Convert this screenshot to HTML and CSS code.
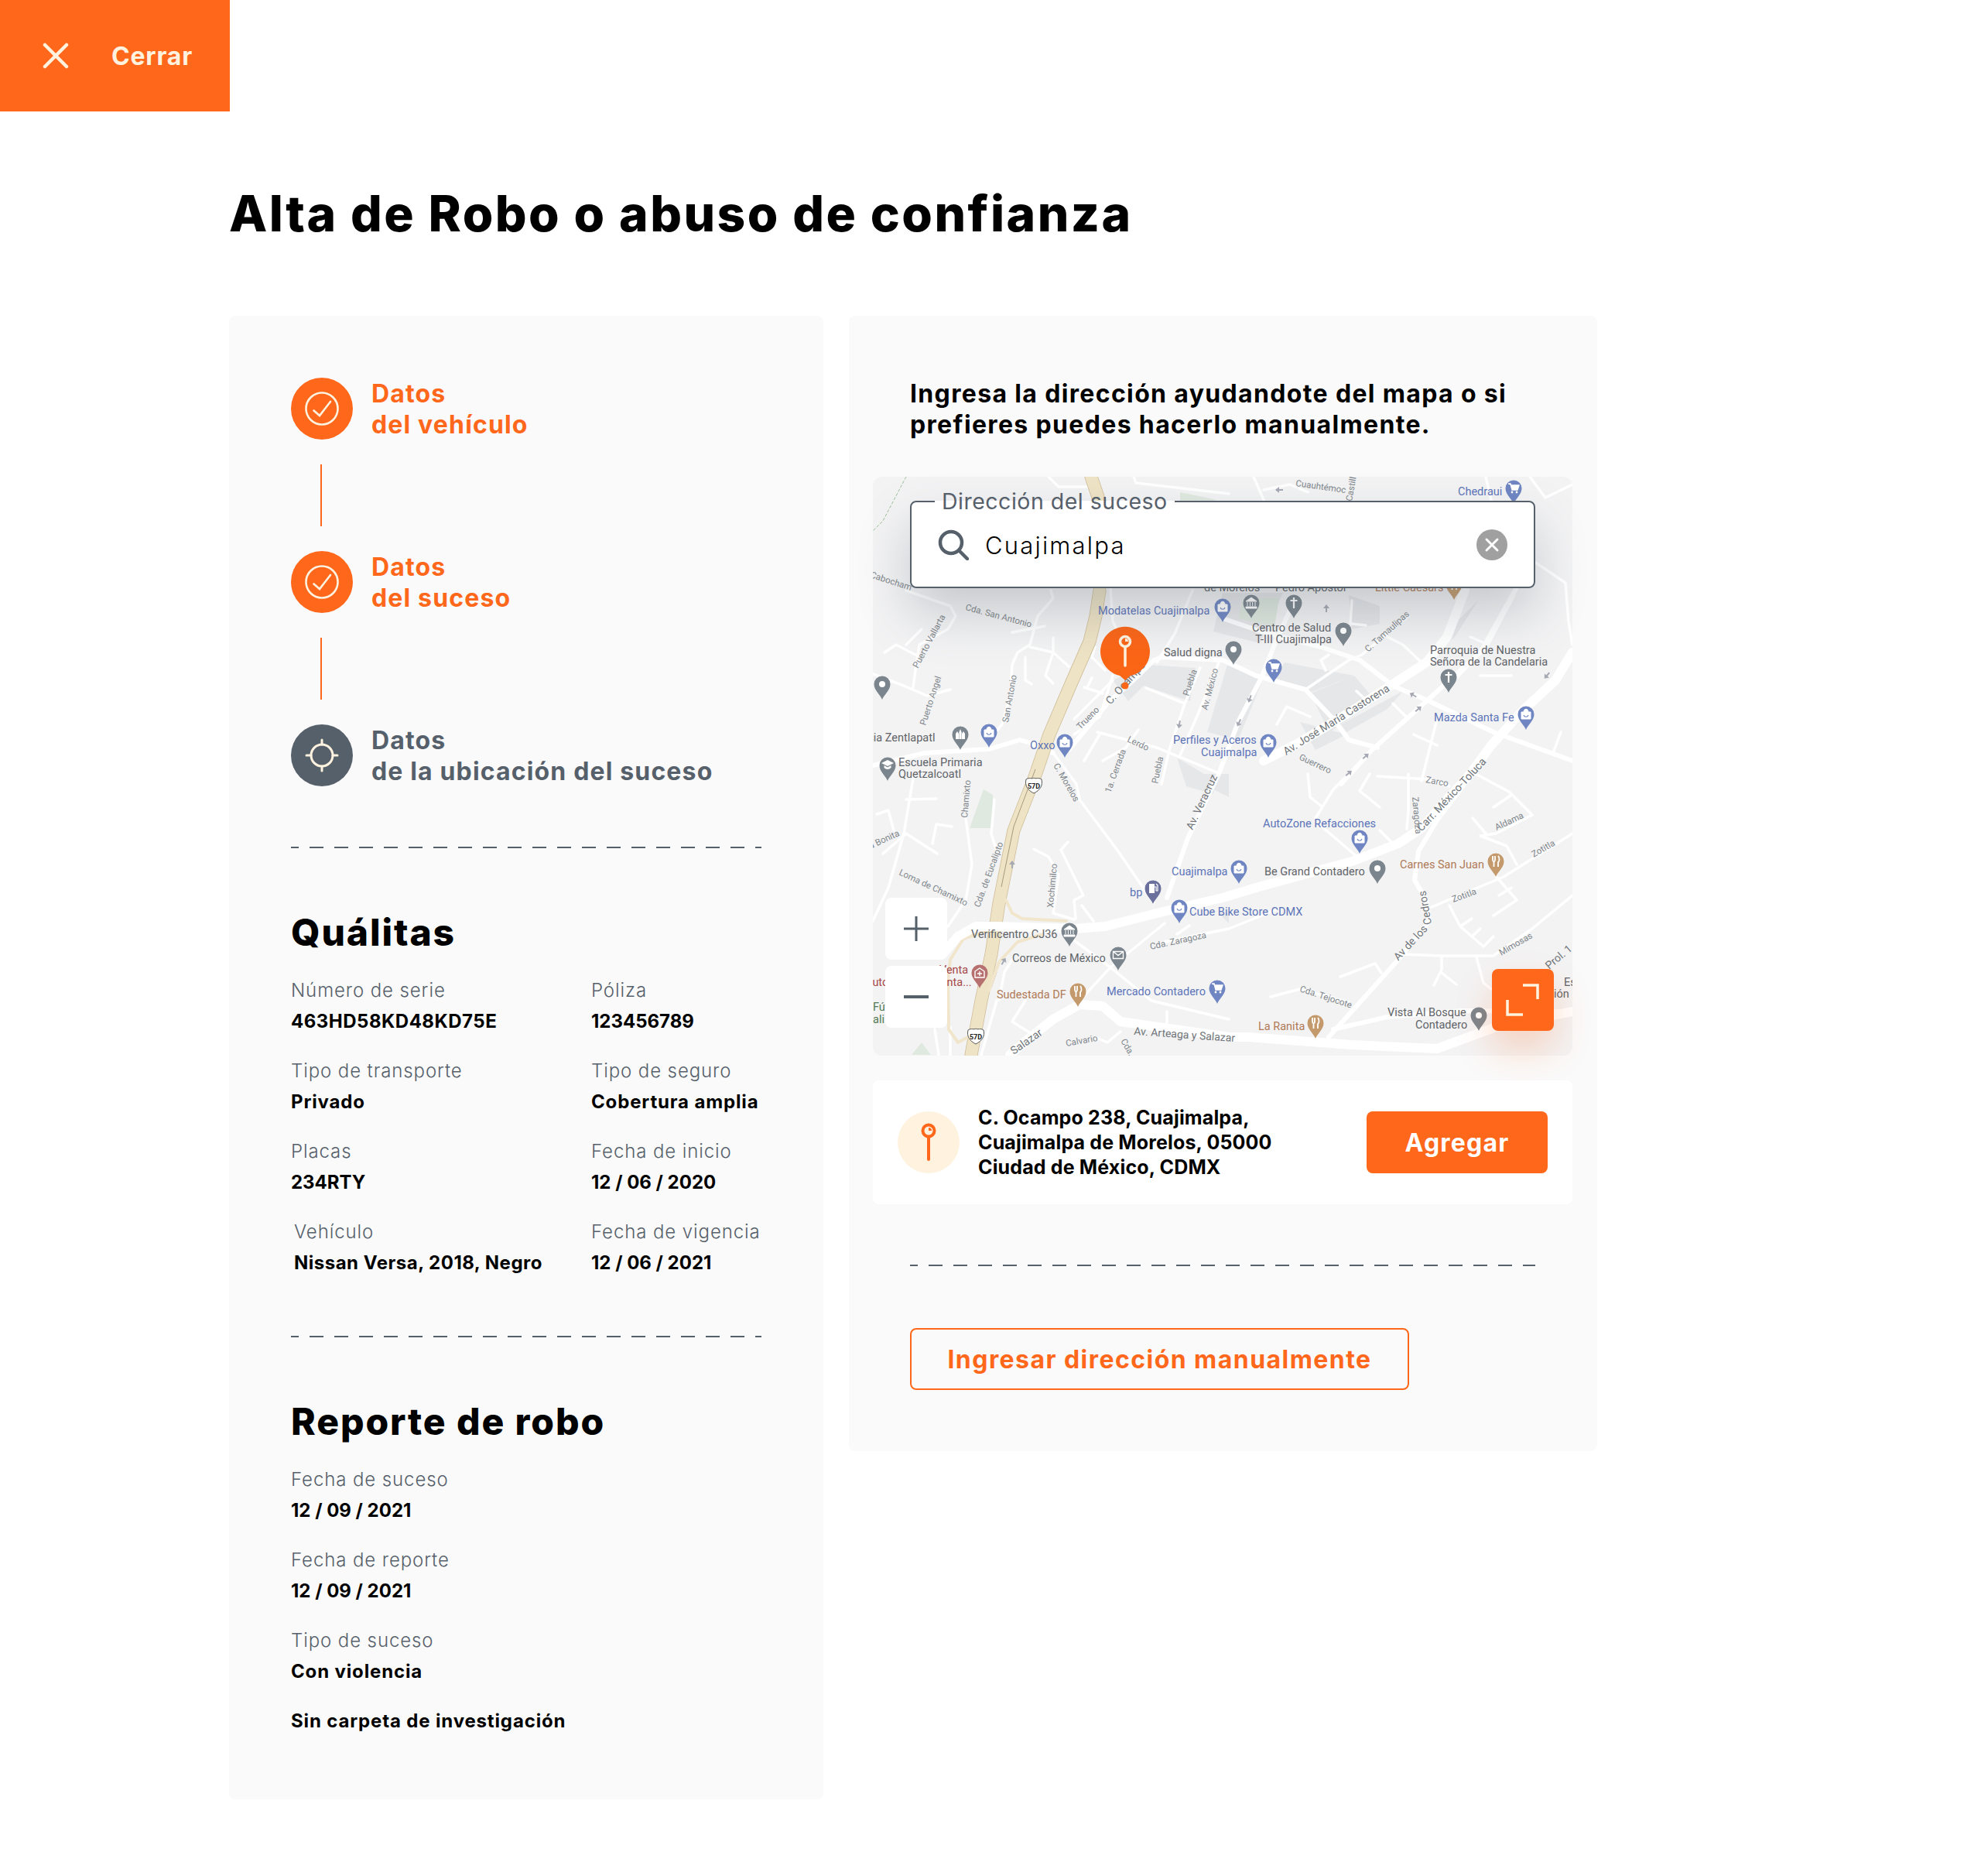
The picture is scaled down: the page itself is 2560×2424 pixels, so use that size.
FILE: index.html
```html
<!DOCTYPE html>
<html lang="es">

<head>
    <meta charset="UTF-8">
    <title>Alta de Robo o abuso de confianza</title>
    <link rel="stylesheet" href="styles.css">
</head>

<body>

    <!-- Boton cerrar -->
    <a class="close-btn" href="#">
        <svg class="close-icon" viewBox="0 0 34 34">
            <path d="M3 3 L31 31 M31 3 L3 31" />
        </svg>
        <span>Cerrar</span>
    </a>

    <h1 class="page-title">Alta de Robo o abuso de confianza</h1>

    <main class="columns">

        <!-- Columna izquierda: pasos y resumen -->
        <section class="panel panel-left">
            <div class="step done">
                <span class="step-circle">
                    <svg viewBox="0 0 44 44">
                        <circle cx="22" cy="22" r="20.5" />
                        <path d="M11.5 24.5 L19 31 L33 13" />
                    </svg>
                </span>
                <p>Datos<br>del vehículo</p>
            </div>
            <div class="step-line"></div>
            <div class="step done">
                <span class="step-circle">
                    <svg viewBox="0 0 44 44">
                        <circle cx="22" cy="22" r="20.5" />
                        <path d="M11.5 24.5 L19 31 L33 13" />
                    </svg>
                </span>
                <p>Datos<br>del suceso</p>
            </div>
            <div class="step-line"></div>
            <div class="step current">
                <span class="step-circle">
                    <svg viewBox="0 0 44 44">
                        <circle cx="22" cy="22" r="14" />
                        <path d="M22 2 V8 M22 36 V42 M2 22 H8 M36 22 H42" />
                    </svg>
                </span>
                <p>Datos<br>de la ubicación del suceso</p>
            </div>

            <div class="dashed first"></div>

            <h2 class="section-title">Quálitas</h2>
            <div class="fields two-cols">
                <div class="field"><span>Número de serie</span><b class="mid">463HD58KD48KD75E</b></div>
                <div class="field"><span>Póliza</span><b class="tight">123456789</b></div>
                <div class="field"><span>Tipo de transporte</span><b>Privado</b></div>
                <div class="field"><span>Tipo de seguro</span><b>Cobertura amplia</b></div>
                <div class="field"><span>Placas</span><b class="tight">234RTY</b></div>
                <div class="field"><span>Fecha de inicio</span><b class="tight">12 / 06 / 2020</b></div>
                <div class="field shifted"><span>Vehículo</span><b class="mid">Nissan Versa, 2018, Negro</b></div>
                <div class="field"><span>Fecha de vigencia</span><b class="tight">12 / 06 / 2021</b></div>
            </div>

            <div class="dashed second"></div>

            <h2 class="section-title">Reporte de robo</h2>
            <div class="fields">
                <div class="field"><span>Fecha de suceso</span><b class="tight">12 / 09 / 2021</b></div>
                <div class="field"><span>Fecha de reporte</span><b class="tight">12 / 09 / 2021</b></div>
                <div class="field"><span>Tipo de suceso</span><b>Con violencia</b></div>
                <div class="field"><b>Sin carpeta de investigación</b></div>
            </div>
        </section>

        <!-- Columna derecha: mapa -->
        <section class="panel panel-right">
            <h3 class="map-title">Ingresa la dirección ayudandote del mapa o si<br>prefieres puedes hacerlo manualmente.</h3>

            <div class="map-wrap">
                <svg class="map" viewBox="0 0 904 748">
                    <defs>
                        <path id="pin" d="M0 20 C-2 14 -10.5 8 -10.5 0 A10.5 10.5 0 1 1 10.5 0 C10.5 8 2 14 0 20Z" />
                        <g id="p-dot"><use href="#pin" /><circle r="4" fill="#fff" /></g>
                        <g id="p-shop"><use href="#pin" /><path d="M-6 -3 H6 V6 H-6Z M-3 -3 C-3 -8 3 -8 3 -3" fill="#fff" stroke="#fff" stroke-width="1" /><path d="M-3 1 C-2 4 2 4 3 1" fill="none" stroke="#6f86c3" stroke-width="1.2" /></g>
                        <g id="p-cart"><use href="#pin" /><path d="M-7 -6 H-4 L-2 2 H5 L7 -4 H-4" fill="#fff" stroke="#fff" stroke-width="1.4" /><circle cx="-2" cy="5" r="1.4" fill="#fff" /><circle cx="4" cy="5" r="1.4" fill="#fff" /></g>
                        <g id="p-food"><use href="#pin" /><path d="M-4 -7 V-2 C-4 0 -2.5 0 -2.5 1 V7 M-1 -7 V-2 C-1 0 -2.5 0 -2.5 1 M3 -7 C5 -5 5 0 3 1 V7" fill="none" stroke="#fff" stroke-width="1.8" /></g>
                        <g id="p-cross"><use href="#pin" /><path d="M0 -7 V7 M-4.5 -3 H4.5" stroke="#fff" stroke-width="2.2" /></g>
                        <g id="p-museum"><use href="#pin" /><path d="M-7 -2 L0 -7 L7 -2Z M-7 5 H7 V7 H-7Z M-5 -1 V4 M-1.6 -1 V4 M1.6 -1 V4 M5 -1 V4" fill="#fff" stroke="#fff" stroke-width="1" /></g>
                        <g id="p-mail"><use href="#pin" /><path d="M-6.5 -4.5 H6.5 V4.5 H-6.5Z M-6.5 -4.5 L0 0.5 L6.5 -4.5" fill="none" stroke="#fff" stroke-width="1.4" /></g>
                        <g id="p-grad"><use href="#pin" /><path d="M-8 -3 L0 -7 L8 -3 L0 1Z M-4.5 0 V3 C-2 5.5 2 5.5 4.5 3 V0 L0 2.4Z" fill="#fff" /></g>
                        <g id="p-church"><use href="#pin" /><path d="M-6 6 V-1 L-4 -4 L-2 -1 V6 M-1.6 6 V-3 L0 -7 L1.6 -3 V6 M2 6 V-1 L4 -4 L6 -1 V6Z" fill="#fff" /></g>
                        <g id="p-fuel"><use href="#pin" /><path d="M-5 -6 H2 V6 H-5Z" fill="#fff" /><path d="M2 -2 H4 V3 H6 V-4 L4 -6" fill="none" stroke="#fff" stroke-width="1.2" /></g>
                        <g id="p-med"><use href="#pin" /><path d="M-6 6 V-2 L0 -6 L6 -2 V6Z" fill="none" stroke="#fff" stroke-width="1.4" /><path d="M0 -2 V4 M-3 1 H3" stroke="#fff" stroke-width="1.4" /></g>
                        <path id="arrow" d="M0 -5 L4 0 H1 V5 H-1 V0 H-4Z" />
                        <g id="shield"><path d="M-10 -8 C-6 -11 -2 -8 0 -10 C2 -8 6 -11 10 -8 C12 0 8 6 0 10 C-8 6 -12 0 -10 -8Z" fill="#fff" stroke="#555" stroke-width="1" /><text class="shield-text" y="4" text-anchor="middle">57D</text></g>
                        <path id="highway-path" d="M282 0 L293 32 M293 147 L288 180 L280 213 L255 270 L228 333 L208 391 L182 457 L163 551 L153 617 L140 677 L127 747" />
                    </defs>

                    <rect width="904" height="748" class="land" />

                    <!-- manzanas y parques -->
                    <g class="block">
                        <path d="M353 243 L417 247 L410 290 L350 270 L330 290 L310 263Z" />
                        <path d="M452 150 L530 150 L500 215 L440 200Z" />
                        <path d="M615 153 L655 167 L655 190 L619 197Z" />
                        <path d="M459 240 L505 260 L472 340 L432 330Z" />
                        <path d="M532 240 L622 257 L562 280 L520 260Z" />
                        <path d="M565 280 L622 257 L650 290 L590 330Z" />
                        <path d="M605 320 L685 277 L665 300 L612 330Z" />
                        <path d="M685 267 L735 207 L782 160 L752 207 L705 243Z" />
                        <path d="M552 317 L612 333 L572 353Z" />
                        <path d="M393 363 L443 393 L440 410 L405 400Z" />
                        <path d="M400 384 L460 384 L460 414Z" />
                        <path d="M447 564 L460 564 L460 577Z" />
                        <path d="M452 277 L465 280 L452 320Z" />
                    </g>
                    <g class="park">
                        <path d="M479 157 L525 157 L519 193 L472 183Z" />
                        <path d="M125 454 L143 404 L155 411 L155 454Z" />
                        <path d="M50 747 L63 731 L75 747Z" />
                        <path d="M397 20 L445 30 L430 32 L397 32Z" />
                    </g>
                    <path class="trail" d="M43 0 L13 57 L0 70" />

                    <!-- calles chicas -->
                    <g class="road-sm">
                        <path d="M15 227 L30 217 L55 230 M43 217 L63 197" />
                        <path d="M0 255 L40 270 L70 283 L100 275" />
                        <path d="M43 147 L100 167 L107 180 L97 197 L60 217 L55 250 L52 272" />
                        <path d="M230 147 L233 157 L213 180 L203 217 L187 227 L180 243 L178 280 L167 320 L150 340" />
                        <path d="M203 220 L233 227 L253 245 M233 208 L233 227 L223 257 L233 267" />
                        <path d="M180 201 L222 193 M197 233 L197 263 L205 268" />
                        <path d="M287 220 L283 233 L300 250 M273 272 L297 280 M283 260 L277 272" />
                        <path d="M260 313 L310 263 M260 333 L293 310 L310 257" />
                        <path d="M233 357 L263 397 L267 417 L317 484 L363 551" />
                        <path d="M293 333 L273 367 M343 327 L327 350 L297 367" />
                        <path d="M290 330 L367 350 L447 383" />
                        <path d="M353 273 L403 293 L383 353 L373 397" />
                        <path d="M423 247 L403 293 M447 240 L423 300 L397 360" />
                        <path d="M307 143 L310 187 L320 207 M413 147 L390 203 L367 240" />
                        <path d="M53 384 L40 461 L20 531 L0 574 M43 417 L82 416 M5 436 L20 431 L27 457" />
                        <path d="M13 487 L43 461 L83 487 M77 474 L82 449 L102 452" />
                        <path d="M120 441 L128 501 L120 547 L97 581" />
                        <path d="M157 417 L153 461 L160 484" />
                        <path d="M208 481 L227 491 L240 514 L233 564 L260 572" />
                        <path d="M252 472 L243 482 L272 541 L260 547 L262 571 M270 554 L285 574" />
                        <path d="M260 599 L307 634 L360 677 L460 701" />
                        <path d="M377 577 L307 634 L267 677" />
                        <path d="M377 601 L460 584 L520 560" />
                        <path d="M180 704 L207 721 M180 704 L197 677" />
                        <path d="M287 724 L303 731 L320 717 M380 691 L380 714 M393 591 L409 580" />
                        <path d="M100 711 L100 747 M80 714 L85 747" />
                        <path d="M163 676 L170 640 L180 624 M160 677 L140 747" />
                        <path d="M722 556 L815 517 L904 461" />
                        <path d="M805 516 L832 547 L802 567 M809 541 L825 531" />
                        <path d="M745 554 L759 581 L789 607 L802 594 M759 581 L774 571 M774 594 L785 584" />
                        <path d="M685 617 L735 619 L802 619 L852 584 L904 541" />
                        <path d="M735 619 L735 637 L725 657 M735 641 L754 656 M780 621 L789 654 L799 662" />
                        <path d="M604 646 L649 629 L657 641 M514 672 L552 662 L615 679" />
                        <path d="M779 384 L822 407 L852 437 L805 461 L785 464 L819 477 L832 501" />
                        <path d="M775 441 L792 461 M802 427 L824 412" />
                        <path d="M572 441 L595 404 L612 387 M629 406 L655 427 M629 406 L642 384" />
                        <path d="M562 384 L565 414 L580 426 M579 451 L629 494 M655 457 L672 474" />
                        <path d="M692 384 L692 430 L690 455 M652 387 L719 391 L745 400" />
                        <path d="M492 0 L505 30 M505 17 L539 10 L562 20 M792 0 L799 30 M849 0 L869 27 L904 10" />
                        <path d="M227 0 L240 13 L277 13 M337 0 L340 8 L460 22" />
                        <path d="M855 110 L895 137 L899 187 L904 217" />
                        <path d="M829 153 L795 217 L742 273 M772 207 L795 217 M785 257 L825 257" />
                        <path d="M672 293 L692 313 M625 277 L639 290 M699 333 L729 347 M729 313 L709 393 M889 330 L879 357" />
                        <path d="M522 320 L535 297 L565 310" />
                        <path d="M559 275 L615 237 L632 230 L692 180 M619 160 L617 190 M579 237 L589 230 M579 237 L585 250" />
                        <path d="M665 207 L685 217 L709 240 M619 190 L637 192" />
                    </g>

                    <!-- calles medianas -->
                    <g class="road-md">
                        <path d="M253 353 L303 293 L343 257 L363 237 L373 233 L452 237 L495 257 L559 275 L595 313 L615 340 L652 350" />
                        <path d="M0 373 L67 357 L150 352 L190 340 L213 347 L233 357" />
                        <path d="M380 544 L407 467 L447 384 L472 317 L502 260 L519 217 L540 170" />
                        <path d="M452 183 L502 200 L579 220 L629 237 L672 270 L719 290 L802 330 L904 367" />
                        <path d="M605 397 L645 353 L712 293 L785 227 L832 143" />
                        <path d="M589 724 L679 624 L719 574 L715 547 L700 521 L705 484 L729 444 L769 391" />
                        <path d="M595 714 L665 698 L760 690 L904 691" />
                    </g>

                    <!-- autopista -->
                    <use href="#highway-path" class="highway-edge" />
                    <use href="#highway-path" class="highway" />
                    <path class="highway-line" d="M210 378 L182 452 L166 530 M160 640 L153 660" />
                    <g class="ramp">
                        <path d="M172 547 L180 564 L193 571 L250 574" />
                        <path d="M217 592 L187 601 L163 627 L150 664" />
                        <path d="M147 587 L117 597 L100 624 L97 651 L98 714 L110 731 L123 724" />
                    </g>

                    <!-- avenidas -->
                    <g class="road-lg">
                        <path d="M90 617 L110 594 L133 581 L160 581 L260 584 L300 581 L367 564 L452 544 L495 531 L619 497 L679 474 L709 454 L742 417 L772 384 L799 347 L839 303 L882 263 L904 227" />
                        <path d="M177 747 L200 727 L233 701 L267 682 L297 684 L320 704 L460 724 L485 724 L619 734 L729 739 L805 711 L904 691" />
                        <path d="M505 367 L552 343 L612 307 L669 270 L715 240 L742 207 L765 147" />
                    </g>

                    <!-- sentido de las calles -->
                    <g class="one-way">
                        <use href="#arrow" transform="translate(525 17) rotate(-90)" />
                        <use href="#arrow" transform="translate(586 170)" />
                        <use href="#arrow" transform="translate(487 287) rotate(200)" />
                        <use href="#arrow" transform="translate(473 318) rotate(205)" />
                        <use href="#arrow" transform="translate(698 282) rotate(-60)" />
                        <use href="#arrow" transform="translate(705 300) rotate(50)" />
                        <use href="#arrow" transform="translate(637 361) rotate(50)" />
                        <use href="#arrow" transform="translate(615 383) rotate(50)" />
                        <use href="#arrow" transform="translate(871 257) rotate(220)" />
                        <use href="#arrow" transform="translate(396 320) rotate(190)" />
                        <use href="#arrow" transform="translate(180 501)" />
                        <use href="#arrow" transform="translate(169 626) rotate(30)" />
                    </g>

                    <use href="#shield" x="208" y="399" />
                    <use href="#shield" x="133" y="723" />

                    <!-- nombres de calles -->
                    <g class="street">
                        <text transform="translate(-4 130) rotate(18)">Cabocham</text>
                        <text transform="translate(119 172) rotate(15)">Cda. San Antonio</text>
                        <text transform="translate(58 248) rotate(-62)">Puerto Vallarta</text>
                        <text transform="translate(68 322) rotate(-72)">Puerto Angel</text>
                        <text transform="translate(175 318) rotate(-80)">San Antonio</text>
                        <text transform="translate(268 327) rotate(-45)">Trueno</text>
                        <text transform="translate(408 284) rotate(-72)">Puebla</text>
                        <text transform="translate(432 302) rotate(-75)">Av. México</text>
                        <text transform="translate(328 342) rotate(25)">Lerdo</text>
                        <text transform="translate(307 409) rotate(-70)">1a. Cerrada</text>
                        <text transform="translate(233 373) rotate(60)">C. Morelos</text>
                        <text transform="translate(368 397) rotate(-78)">Puebla</text>
                        <text transform="translate(546 12) rotate(8)">Cuauhtémoc</text>
                        <text transform="translate(619 32) rotate(-80)">Castillo</text>
                        <text transform="translate(640 227) rotate(-42)">C. Tamaulipas</text>
                        <text transform="translate(550 365) rotate(25)">Guerrero</text>
                        <text transform="translate(714 395) rotate(10)">Zarco</text>
                        <text transform="translate(697 414) rotate(85)">Zaragoza</text>
                        <text transform="translate(359 611) rotate(-12)">Cda. Zaragoza</text>
                        <text transform="translate(33 514) rotate(25)">Loma de Chamixto</text>
                        <text transform="translate(-3 481) rotate(-25)">a Bonita</text>
                        <text transform="translate(122 441) rotate(-85)">Chamixto</text>
                        <text transform="translate(138 557) rotate(-70)">Cda. de Eucalipto</text>
                        <text transform="translate(233 557) rotate(-85)">Xochimilco</text>
                        <text transform="translate(250 736) rotate(-10)">Calvario</text>
                        <text transform="translate(320 729) rotate(60)">Cda.</text>
                        <text transform="translate(551 665) rotate(18)">Cda. Tejocote</text>
                        <text transform="translate(750 550) rotate(-20)">Zotitla</text>
                        <text transform="translate(854 492) rotate(-30)">Zotitla</text>
                        <text transform="translate(806 457) rotate(-25)">Aldama</text>
                        <text transform="translate(812 619) rotate(-30)">Mimosas</text>
                    </g>
                    <g class="street big">
                        <text transform="translate(307 295) rotate(-48)">C. Ocampo</text>
                        <text transform="translate(413 457) rotate(-65)">Av. Veracruz</text>
                        <text transform="translate(534 360) rotate(-32)">Av. José María Castorena</text>
                        <text transform="translate(709 459) rotate(-47)">Carr. México-Toluca</text>
                        <text transform="translate(337 721) rotate(4)">Av. Arteaga y Salazar</text>
                        <text transform="translate(182 747) rotate(-35)">Salazar</text>
                        <text transform="translate(679 626) rotate(-47)">Av de los</text>
                        <text transform="translate(722 578) rotate(-100)">Cedros</text>
                        <text transform="translate(874 637) rotate(-40)">Prol. 1</text>
                    </g>

                    <!-- lugares -->
                    <g class="poi blue">
                        <text x="291" y="178">Modatelas Cuajimalpa</text>
                        <text x="203" y="352">Oxxo</text>
                        <text x="388" y="345">Perfiles y Aceros</text>
                        <text x="424" y="361">Cuajimalpa</text>
                        <text x="756" y="24">Chedraui</text>
                        <text x="725" y="316">Mazda Santa Fe</text>
                        <text x="504" y="453">AutoZone Refacciones</text>
                        <text x="386" y="515">Cuajimalpa</text>
                        <text x="409" y="567">Cube Bike Store CDMX</text>
                        <text x="302" y="670">Mercado Contadero</text>
                        <use href="#p-shop" x="452" y="168" />
                        <use href="#p-shop" x="150" y="330" />
                        <use href="#p-shop" x="248" y="343" />
                        <use href="#p-shop" x="511" y="343" />
                        <use href="#p-cart" x="828" y="15" />
                        <use href="#p-cart" x="518" y="246" />
                        <use href="#p-shop" x="844" y="307" />
                        <use href="#p-shop" x="629" y="467" />
                        <use href="#p-shop" x="473" y="506" />
                        <use href="#p-shop" x="396" y="557" />
                        <use href="#p-cart" x="445" y="661" />
                    </g>
                    <g class="poi gray">
                        <text x="376" y="232">Salud digna</text>
                        <text x="-30" y="342">Iglesia Zentlapatl</text>
                        <text x="33" y="374">Escuela Primaria</text>
                        <text x="33" y="389">Quetzalcoatl</text>
                        <text x="490" y="200">Centro de Salud</text>
                        <text x="494" y="215">T-III Cuajimalpa</text>
                        <text x="720" y="229">Parroquia de Nuestra</text>
                        <text x="720" y="244">Señora de la Candelaria</text>
                        <text x="428" y="148">de Morelos</text>
                        <text x="520" y="148">Pedro Apóstol</text>
                        <text x="506" y="515">Be Grand Contadero</text>
                        <text x="127" y="596">Verificentro CJ36</text>
                        <text x="180" y="627">Correos de México</text>
                        <text x="665" y="697">Vista Al Bosque</text>
                        <text x="701" y="713">Contadero</text>
                        <text x="893" y="658">Es</text>
                        <text x="880" y="673">ión</text>
                        <use href="#p-dot" x="466" y="223" />
                        <use href="#p-church" x="113" y="333" />
                        <use href="#p-grad" x="19" y="373" />
                        <use href="#p-dot" x="12" y="268" />
                        <use href="#p-dot" x="608" y="199" />
                        <use href="#p-museum" x="489" y="163" />
                        <use href="#p-cross" x="544" y="163" />
                        <use href="#p-cross" x="744" y="259" />
                        <use href="#p-dot" x="652" y="506" />
                        <use href="#p-museum" x="254" y="587" />
                        <use href="#p-mail" x="317" y="618" />
                        <use href="#p-dot" x="783" y="696" />
                    </g>
                    <g class="poi brown">
                        <text x="649" y="148">Little Caesars</text>
                        <text x="681" y="506">Carnes San Juan</text>
                        <text x="160" y="674">Sudestada DF</text>
                        <text x="498" y="715">La Ranita</text>
                        <use href="#p-food" x="751" y="139" />
                        <use href="#p-food" x="805" y="497" />
                        <use href="#p-food" x="265" y="665" />
                        <use href="#p-food" x="572" y="706" />
                    </g>
                    <g class="poi red">
                        <text x="86" y="642">Venta</text>
                        <text x="79" y="658">Santa...</text>
                        <text x="-10" y="658">Auto</text>
                        <use href="#p-med" x="138" y="641" />
                    </g>
                    <g class="poi green">
                        <text x="0" y="690">Fút</text>
                        <text x="0" y="706">ali</text>
                    </g>
                    <g class="poi navy">
                        <text x="332" y="542">bp</text>
                        <use href="#p-fuel" x="362" y="532" />
                    </g>

                    <!-- pin seleccionado -->
                    <circle class="pin-dot" cx="326" cy="270" r="4.5" />
                    <path class="pin-head" d="M326 263 L319 257 A32 32 0 1 1 333 257Z" />
                    <path class="pin-mark" d="M326 220 V244" />
                    <circle class="pin-mark" cx="326" cy="213" r="6.5" />
                    <path class="pin-fill" d="M326 209 A4 4 0 0 1 330 213 L326 213Z" />
                </svg>

                <!-- buscador flotante -->
                <fieldset class="search-box">
                    <legend>Dirección del suceso</legend>
                    <div class="search-row">
                        <svg class="search-icon" viewBox="0 0 40 40">
                            <circle cx="17" cy="17" r="14" />
                            <path d="M27 27 L38 38" />
                        </svg>
                        <span class="search-text">Cuajimalpa</span>
                        <svg class="search-clear" viewBox="0 0 40 40">
                            <circle cx="20" cy="20" r="20" />
                            <path d="M13 13 L27 27 M27 13 L13 27" />
                        </svg>
                    </div>
                </fieldset>

                <button class="zoom-btn zoom-in">
                    <svg viewBox="0 0 32 32"><path d="M0 16 H32 M16 0 V32" /></svg>
                </button>
                <button class="zoom-btn zoom-out">
                    <svg viewBox="0 0 32 32"><path d="M0 16 H32" /></svg>
                </button>
                <button class="expand-btn">
                    <svg viewBox="0 0 80 80"><path d="M40 21 H59 V39 M20 40 V59 H40" /></svg>
                </button>
            </div>

            <div class="address-card">
                <span class="address-pin">
                    <svg viewBox="0 0 40 56">
                        <circle cx="20" cy="13" r="7.5" />
                        <path d="M20 21 V50" />
                        <path class="pin-inner" d="M20 9 A4 4 0 0 1 24 13 L20 13Z" />
                    </svg>
                </span>
                <p>C. Ocampo 238, Cuajimalpa,<br>Cuajimalpa de Morelos, 05000<br>Ciudad de México, CDMX</p>
                <button class="add-btn">Agregar</button>
            </div>

            <div class="dashed right"></div>

            <button class="manual-btn">Ingresar dirección manualmente</button>
        </section>

    </main>

</body>

</html>
```

FILE: styles.css
```css
* {
    box-sizing: border-box;
}

body {
    margin: 0;
    background: #fff;
    color: #000;
    font-family: Inter, "Liberation Sans", sans-serif;
}

p,
h1,
h2,
h3 {
    margin: 0;
}

button {
    font-family: inherit;
    cursor: pointer;
}

.close-btn {
    display: flex;
    align-items: center;
    width: 297px;
    height: 144px;
    padding-left: 55px;
    background: #ff671b;
    color: #fff3e0;
    font-size: 32px;
    font-weight: 700;
    letter-spacing: 0.8px;
    text-decoration: none;
}

.close-icon {
    width: 34px;
    height: 34px;
    margin-right: 55px;
    fill: none;
    stroke: #fff3e0;
    stroke-width: 4.5;
    stroke-linecap: round;
}

.page-title {
    margin: 92px 0 0 296px;
    font-size: 64px;
    line-height: 80px;
    font-weight: 800;
    letter-spacing: 2.45px;
}

.columns {
    display: grid;
    grid-template-columns: 768px 967px;
    gap: 33px;
    align-items: start;
    margin: 92px 0 0 296px;
}

.panel {
    background: #fafafa;
    border-radius: 8px;
}

.panel-left {
    height: 1917px;
    padding: 80px 80px 0;
}

.panel-right {
    height: 1467px;
    padding: 81px 32px 0 31px;
}

/* pasos */
.step {
    display: flex;
    align-items: center;
    gap: 24px;
    height: 80px;
    font-size: 32px;
    line-height: 40px;
    font-weight: 700;
    letter-spacing: 1.15px;
}

.step p {
    padding-top: 2px;
}

.step-circle {
    display: flex;
    align-items: center;
    justify-content: center;
    width: 80px;
    height: 80px;
    border-radius: 50%;
    color: #fff;
}

.step-circle svg {
    width: 44px;
    height: 44px;
    fill: none;
    stroke: #fff3e0;
    stroke-width: 2.6;
    stroke-linecap: round;
}

.step.done {
    color: #ff671b;
}

.step.done .step-circle {
    background: #ff671b;
}

.step.current {
    color: #56606b;
}

.step.current .step-circle {
    background: #56606b;
}

.step.current .step-circle svg {
    stroke-width: 3;
}

.step-line {
    width: 2px;
    height: 80px;
    margin: 32px 0 32px 38px;
    background: #ff671b;
}

.dashed {
    height: 2px;
    background-image: linear-gradient(90deg, #56606b 56.25%, transparent 0);
    background-size: 32px 2px;
    background-position: -8px 0;
}

.dashed.first {
    margin-top: 78px;
}

.dashed.second {
    margin-top: 74px;
}

.dashed.right {
    width: 808px;
    margin: 78px 0 0 48px;
}

.section-title {
    margin: 77px 0 23px;
    font-size: 48px;
    line-height: 64px;
    font-weight: 800;
    letter-spacing: 1.9px;
}

.fields {
    display: grid;
    row-gap: 24px;
}

.fields.two-cols {
    grid-template-columns: 388px 1fr;
}

.field {
    display: flex;
    flex-direction: column;
    font-size: 24px;
    line-height: 40px;
    white-space: nowrap;
}

.field span {
    color: #56606b;
    font-weight: 300;
    letter-spacing: 0.9px;
}

.field b {
    font-weight: 700;
    letter-spacing: 0.85px;
}

.field b.mid {
    letter-spacing: 0.5px;
}

.field b.tight {
    letter-spacing: 0;
}

.field.shifted {
    margin-left: 4px;
}

/* mapa */
.map-title {
    margin-left: 48px;
    font-size: 32px;
    line-height: 40px;
    font-weight: 700;
    letter-spacing: 1.35px;
}

.map-wrap {
    position: relative;
    width: 904px;
    height: 748px;
    margin-top: 47px;
}

.map {
    display: block;
    width: 904px;
    height: 748px;
    border-radius: 12px;
}

.land {
    fill: #f3f3f4;
}

.block path {
    fill: #e6e7e9;
}

.park path {
    fill: #dfe9df;
}

.trail {
    fill: none;
    stroke: #9cc09c;
    stroke-width: 1;
    stroke-dasharray: 4 2;
}

.road-sm path,
.road-md path,
.road-lg path,
.highway,
.highway-edge,
.ramp path {
    fill: none;
    stroke-linejoin: round;
    stroke-linecap: round;
}

.road-sm path {
    stroke: #fff;
    stroke-width: 3.5;
}

.road-md path {
    stroke: #fff;
    stroke-width: 6;
}

.road-lg path {
    stroke: #fff;
    stroke-width: 12;
}

.highway-edge {
    stroke: #cdbb95;
    stroke-width: 17;
}

.highway {
    stroke: #eee3c5;
    stroke-width: 15.5;
}

.highway-line {
    fill: none;
    stroke: #a89a7c;
    stroke-width: 1;
}

.ramp path {
    stroke: #f1e6cc;
    stroke-width: 4;
}

.one-way {
    fill: #a6a9b3;
}

.shield-text {
    fill: #222;
    font-family: Roboto, sans-serif;
    font-size: 9px;
    font-weight: 700;
}

.street text {
    fill: #80868b;
    font-family: Roboto, sans-serif;
    font-size: 11.5px;
}

.street.big text {
    fill: #70757a;
    font-size: 14px;
}

.poi text {
    font-family: Roboto, sans-serif;
    font-size: 14.5px;
}

.poi.blue {
    fill: #6f86c3;
}

.poi.blue text {
    fill: #5c73b8;
}

.poi.gray {
    fill: #7b858d;
}

.poi.gray text {
    fill: #5f6368;
}

.poi.brown {
    fill: #c49a6c;
}

.poi.brown text {
    fill: #b07a56;
}

.poi.red {
    fill: #b5706f;
}

.poi.red text {
    fill: #a5484a;
}

.poi.green text {
    fill: #4f7a52;
}

.poi.navy {
    fill: #6a6f9c;
}

.poi.navy text {
    fill: #5c73b8;
}

.pin-head,
.pin-dot {
    fill: #fb6516;
}

.pin-mark {
    fill: none;
    stroke: #fff3e0;
    stroke-width: 3.5;
    stroke-linecap: round;
}

.pin-fill {
    fill: #fff3e0;
}

.search-box {
    position: absolute;
    top: 12px;
    left: 48px;
    width: 808px;
    height: 132px;
    margin: 0;
    padding: 0 0 18px;
    border: 2px solid #56606b;
    border-radius: 8px;
    background: #fff;
    box-shadow: 0 32px 64px rgba(86, 96, 107, 0.28);
}

.search-box legend {
    margin-left: 30px;
    padding: 0 9px;
    color: #56606b;
    font-size: 28.5px;
    line-height: 40px;
    letter-spacing: 0.5px;
}

.search-row {
    display: flex;
    align-items: center;
    height: 72px;
    padding: 0 34px;
}

.search-icon {
    width: 40px;
    height: 40px;
    fill: none;
    stroke: #56606b;
    stroke-width: 4.5;
    stroke-linecap: round;
}

.search-text {
    flex: 1;
    margin-left: 21px;
    font-size: 31px;
    font-weight: 300;
    letter-spacing: 2.2px;
}

.search-clear {
    width: 40px;
    height: 40px;
}

.search-clear circle {
    fill: #a0a0a0;
}

.search-clear path {
    fill: none;
    stroke: #fff;
    stroke-width: 3;
    stroke-linecap: round;
}

.zoom-btn {
    position: absolute;
    left: 16px;
    display: flex;
    align-items: center;
    justify-content: center;
    width: 80px;
    height: 80px;
    padding: 0;
    border: 0;
    border-radius: 8px;
    background: #fff;
}

.zoom-btn svg {
    width: 32px;
    height: 32px;
    fill: none;
    stroke: #56606b;
    stroke-width: 3;
}

.zoom-in {
    top: 544px;
}

.zoom-out {
    top: 632px;
}

.zoom-out svg {
    stroke-width: 4;
}

.expand-btn {
    position: absolute;
    top: 636px;
    left: 800px;
    width: 80px;
    height: 80px;
    padding: 0;
    border: 0;
    border-radius: 8px;
    background: #ff671b;
    box-shadow: 0 24px 48px rgba(255, 103, 27, 0.24);
}

.expand-btn svg {
    display: block;
    width: 80px;
    height: 80px;
    fill: none;
    stroke: #fff3e0;
    stroke-width: 3.5;
}

/* direccion elegida */
.address-card {
    position: relative;
    display: flex;
    align-items: center;
    height: 160px;
    margin-top: 32px;
    padding: 0 32px;
    border-radius: 8px;
    background: #fff;
    font-size: 25px;
    line-height: 32px;
    font-weight: 700;
    letter-spacing: 0.15px;
}

.address-pin {
    display: flex;
    align-items: center;
    justify-content: center;
    width: 80px;
    height: 80px;
    margin-right: 24px;
    border-radius: 50%;
    background: #fff3e0;
}

.address-pin svg {
    width: 40px;
    height: 56px;
    fill: none;
    stroke: #ff671b;
    stroke-width: 4;
    stroke-linecap: round;
}

.address-pin .pin-inner {
    fill: #ff671b;
    stroke: none;
}

.add-btn {
    width: 234px;
    height: 80px;
    margin-left: auto;
    border: 0;
    border-radius: 8px;
    background: #ff671b;
    color: #fff;
    font-size: 32px;
    font-weight: 700;
    letter-spacing: 1.2px;
}

.manual-btn {
    display: block;
    width: 645px;
    height: 80px;
    margin: 80px 0 0 48px;
    border: 2px solid #ff671b;
    border-radius: 8px;
    background: transparent;
    color: #ff671b;
    font-size: 32px;
    font-weight: 700;
    letter-spacing: 1.45px;
}
```
